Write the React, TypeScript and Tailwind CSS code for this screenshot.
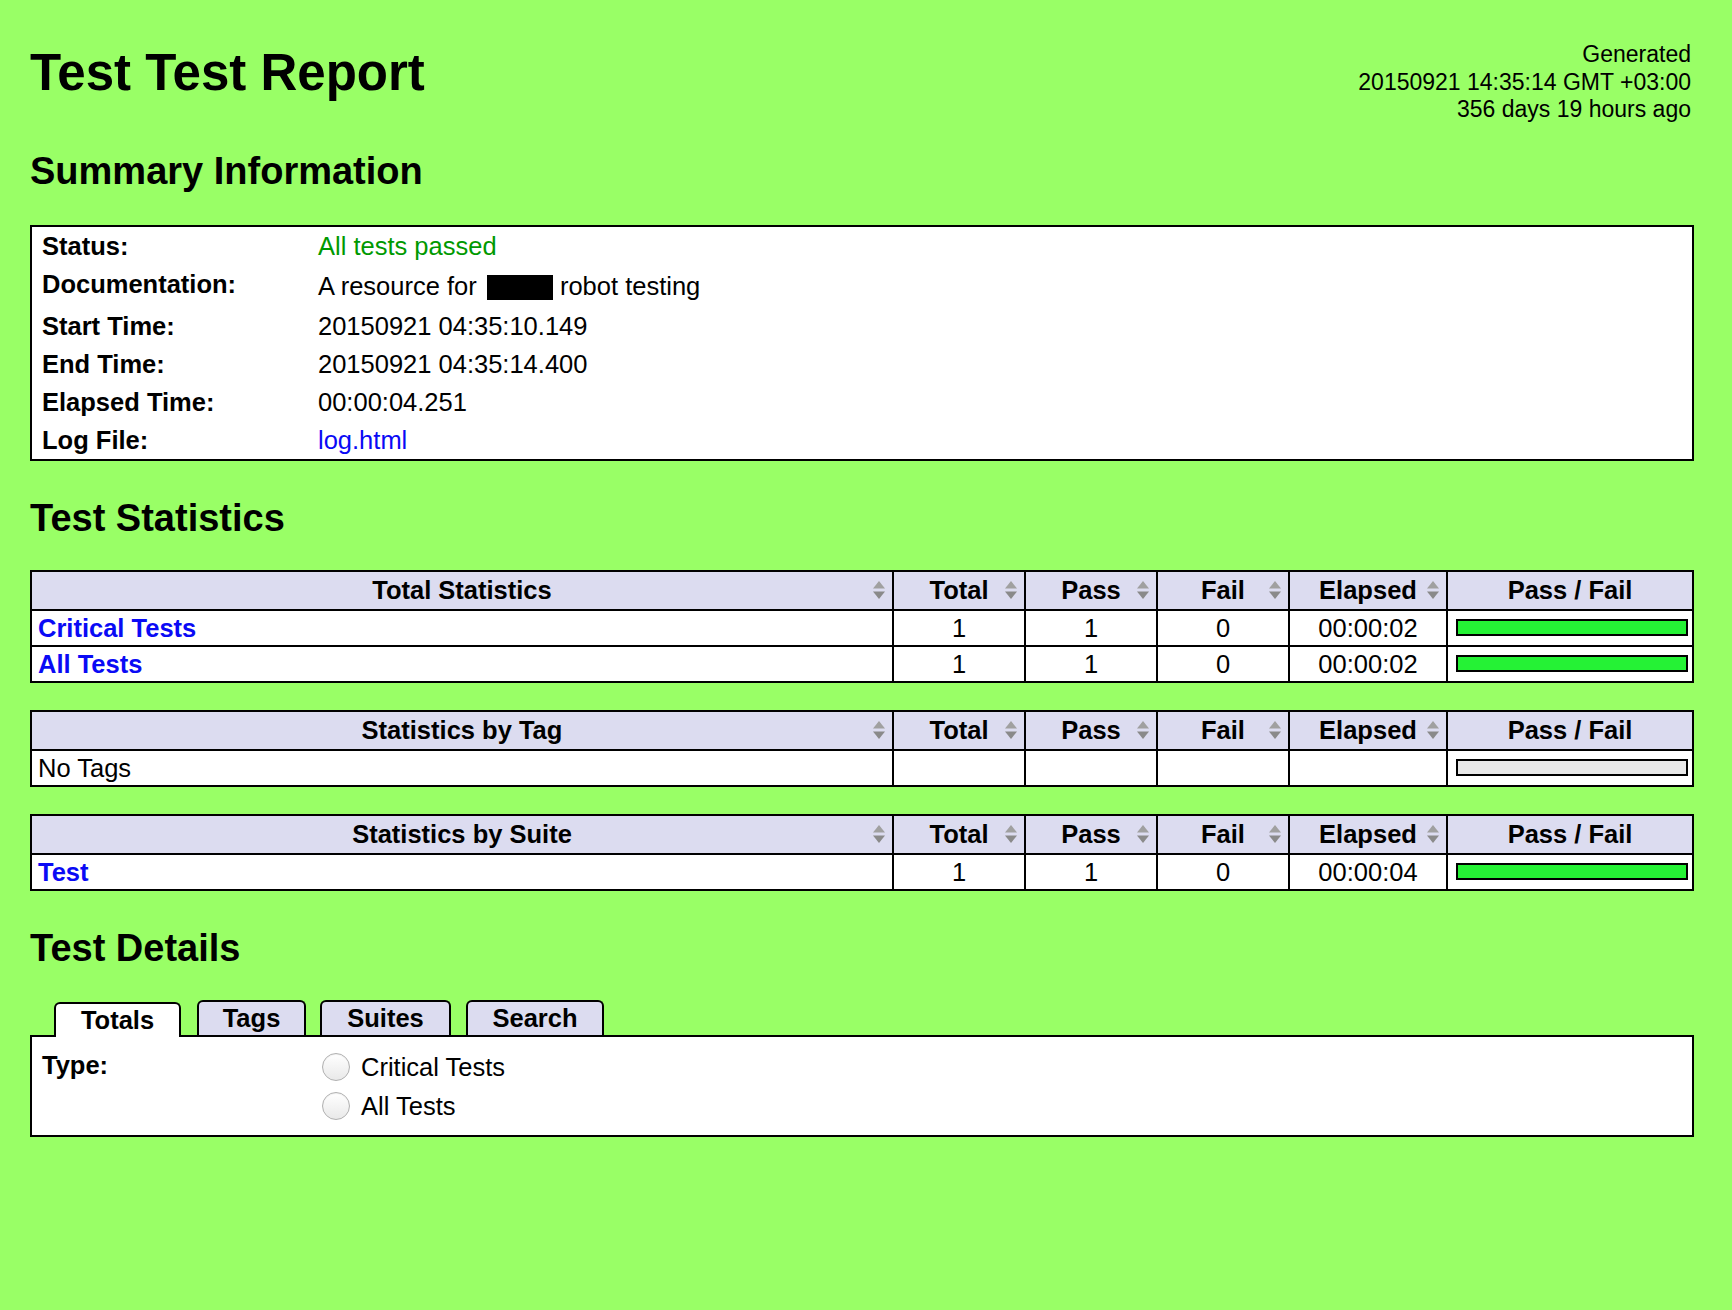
import React from 'react';

type StatRow = {
  name: string;
  link?: boolean;
  total?: string;
  pass?: string;
  fail?: string;
  elapsed?: string;
  bar: 'pass' | 'empty';
};

const SortArrows = () => (
  <svg
    width="12"
    height="18"
    viewBox="0 0 12 18"
    className="absolute right-[7px] top-1/2 -translate-y-1/2"
  >
    <path d="M6 0 L12 7.5 L0 7.5 Z" fill="#a0a0a0" />
    <path d="M0 10.5 L12 10.5 L6 18 Z" fill="#8a8a8a" />
  </svg>
);

const HeadCell = ({ children, sortable }: { children: React.ReactNode; sortable?: boolean }) => (
  <div className="relative flex h-[37px] items-center justify-center bg-[#dcdcf0] font-bold">
    {children}
    {sortable && <SortArrows />}
  </div>
);

const Cell = ({ children, left }: { children?: React.ReactNode; left?: boolean }) => (
  <div
    className={
      left
        ? 'flex h-[34px] items-center bg-white pl-[6px]'
        : 'flex h-[34px] items-center justify-center bg-white'
    }
  >
    {children}
  </div>
);

const StatTable = ({ title, rows }: { title: string; rows: StatRow[] }) => (
  <div className="grid w-max grid-cols-[860px_130px_130px_130px_156px_244px] gap-[2px] bg-black p-[2px]">
    <HeadCell sortable>{title}</HeadCell>
    <HeadCell sortable>Total</HeadCell>
    <HeadCell sortable>Pass</HeadCell>
    <HeadCell sortable>Fail</HeadCell>
    <HeadCell sortable>Elapsed</HeadCell>
    <HeadCell>Pass / Fail</HeadCell>
    {rows.map((r) => (
      <React.Fragment key={r.name}>
        <Cell left>
          {r.link ? <a className="font-bold text-[#0a0af5]">{r.name}</a> : r.name}
        </Cell>
        <Cell>{r.total}</Cell>
        <Cell>{r.pass}</Cell>
        <Cell>{r.fail}</Cell>
        <Cell>{r.elapsed}</Cell>
        <div className="flex h-[34px] items-center bg-white pl-[8px]">
          <div
            className={
              r.bar === 'pass'
                ? 'h-[17px] w-[232px] border-2 border-black bg-[#25f235]'
                : 'h-[17px] w-[232px] border-2 border-black bg-[#e8e8e8]'
            }
          />
        </div>
      </React.Fragment>
    ))}
  </div>
);

const Tab = ({ label, className, active }: { label: string; className: string; active?: boolean }) => (
  <div
    className={
      active
        ? `relative z-10 -mb-[2px] mt-[2px] flex h-[35px] items-center justify-center rounded-t-[6px] border-2 border-b-0 border-black bg-white font-bold ${className}`
        : `flex h-[35px] items-center justify-center rounded-t-[6px] border-2 border-b-0 border-black bg-[#dcdcf0] font-bold ${className}`
    }
  >
    {label}
  </div>
);

const Radio = ({ label }: { label: string }) => (
  <div className="flex h-[38.6px] items-center">
    <span className="ml-[4px] mr-[11px] inline-block h-[28px] w-[28px] rounded-full border border-[#b0b0b0] bg-gradient-to-b from-white to-[#e9e9e9] shadow-[inset_0_1px_1px_rgba(0,0,0,0.06)]" />
    <span>{label}</span>
  </div>
);

export default function App() {
  const summary: { label: string; value: React.ReactNode; tall?: boolean }[] = [
    { label: 'Status:', value: <span className="text-[#009900]">All tests passed</span> },
    {
      label: 'Documentation:',
      tall: true,
      value: (
        <span>
          A resource for{' '}
          <span className="ml-[3px] inline-block h-[25px] w-[66px] bg-black align-middle" /> robot testing
        </span>
      ),
    },
    { label: 'Start Time:', value: '20150921 04:35:10.149' },
    { label: 'End Time:', value: '20150921 04:35:14.400' },
    { label: 'Elapsed Time:', value: '00:00:04.251' },
    { label: 'Log File:', value: <a className="text-[#0a0af5]">log.html</a> },
  ];

  return (
    <div className="min-h-screen bg-[#99ff66] pl-[30px] pr-[38px] font-['Liberation_Sans',Arial,sans-serif] text-[25.5px] text-black">
      <div className="flex items-start justify-between pr-[3px] pt-[41px]">
        <h1 className="mt-[6px] text-[51px] font-bold leading-[51px]">Test Test Report</h1>
        <div className="text-right text-[23px] leading-[27.6px]">
          <div>Generated</div>
          <div>20150921 14:35:14 GMT +03:00</div>
          <div>356 days 19 hours ago</div>
        </div>
      </div>

      <h2 className="mt-[28px] text-[38px] font-bold leading-[38px]">Summary Information</h2>
      <div className="mt-[35px] w-[1664px] border-2 border-black bg-white">
        {summary.map((s) => (
          <div key={s.label} className="grid grid-cols-[286px_1fr]">
            <div className="self-start pl-[10px] font-bold leading-[38px]">{s.label}</div>
            <div className={s.tall ? 'flex h-[42px] items-center' : 'leading-[38px]'}>{s.value}</div>
          </div>
        ))}
      </div>

      <h2 className="mt-[38px] text-[38px] font-bold leading-[38px]">Test Statistics</h2>
      <div className="mt-[33px]">
        <StatTable
          title="Total Statistics"
          rows={[
            { name: 'Critical Tests', link: true, total: '1', pass: '1', fail: '0', elapsed: '00:00:02', bar: 'pass' },
            { name: 'All Tests', link: true, total: '1', pass: '1', fail: '0', elapsed: '00:00:02', bar: 'pass' },
          ]}
        />
      </div>
      <div className="mt-[27px]">
        <StatTable title="Statistics by Tag" rows={[{ name: 'No Tags', bar: 'empty' }]} />
      </div>
      <div className="mt-[27px]">
        <StatTable
          title="Statistics by Suite"
          rows={[{ name: 'Test', link: true, total: '1', pass: '1', fail: '0', elapsed: '00:00:04', bar: 'pass' }]}
        />
      </div>

      <h2 className="mt-[38px] text-[38px] font-bold leading-[38px]">Test Details</h2>
      <div className="mt-[33px] flex items-start pl-[24px]">
        <Tab label="Totals" className="w-[127px]" active />
        <Tab label="Tags" className="ml-[16px] w-[109px]" />
        <Tab label="Suites" className="ml-[14px] w-[131px]" />
        <Tab label="Search" className="ml-[15px] w-[138px]" />
      </div>
      <div className="w-[1664px] border-2 border-black bg-white pb-[10px] pt-[11px]">
        <div className="grid grid-cols-[286px_1fr]">
          <div className="pl-[10px] font-bold leading-[34px]">Type:</div>
          <div>
            <Radio label="Critical Tests" />
            <Radio label="All Tests" />
          </div>
        </div>
      </div>
    </div>
  );
}
